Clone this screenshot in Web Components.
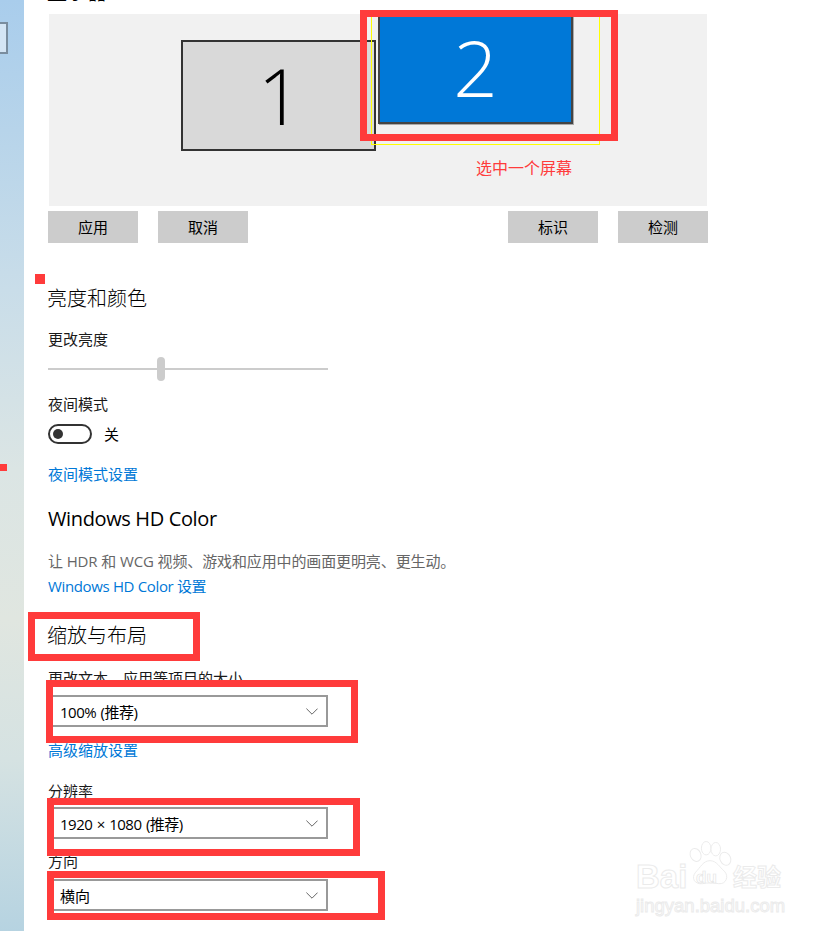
<!DOCTYPE html>
<html lang="zh">
<head>
<meta charset="utf-8">
<title>显示</title>
<style>
    html, body { margin: 0; padding: 0; background: #fff; }
    body { width: 831px; height: 931px; overflow: hidden; font-family: "Open Sans", "Noto Sans CJK SC", sans-serif; }
</style>
</head>
<body>
<display-settings></display-settings>

<script>
const CJK = '"Open Sans", "Noto Sans CJK SC", sans-serif';

class RedBox extends HTMLElement {
    connectedCallback() {
        const [x, y, w, h] = this.getAttribute('rect').split(',');
        this.attachShadow({ mode: 'open' });
        this.shadowRoot.innerHTML = `
            <style>
                :host {
                    position: absolute;
                    left: ${x}px;
                    top: ${y}px;
                    width: ${w}px;
                    height: ${h}px;
                    box-sizing: border-box;
                    border: 7px solid #ff3b3b;
                    pointer-events: none;
                }
            </style>
        `;
    }
}
customElements.define('red-box', RedBox);

class SectionHeading extends HTMLElement {
    connectedCallback() {
        this.attachShadow({ mode: 'open' });
        this.shadowRoot.innerHTML = `
            <style>
                :host { display: block; margin-left: -1px; font-size: 20px; font-weight: 300; line-height: 28px; color: #000; white-space: nowrap; }
            </style>
            <slot></slot>
        `;
    }
}
customElements.define('section-heading', SectionHeading);

class FieldLabel extends HTMLElement {
    connectedCallback() {
        this.attachShadow({ mode: 'open' });
        this.shadowRoot.innerHTML = `
            <style>
                :host { display: block; font-size: 15px; line-height: 20px; color: #1a1a1a; white-space: nowrap; }
            </style>
            <slot></slot>
        `;
    }
}
customElements.define('field-label', FieldLabel);

class SettingsLink extends HTMLElement {
    connectedCallback() {
        this.attachShadow({ mode: 'open' });
        this.shadowRoot.innerHTML = `
            <style>
                :host { display: block; font-size: 15px; line-height: 20px; color: #0078d7; white-space: nowrap; cursor: pointer; }
            </style>
            <slot></slot>
        `;
    }
}
customElements.define('settings-link', SettingsLink);

class ActionButton extends HTMLElement {
    connectedCallback() {
        this.attachShadow({ mode: 'open' });
        this.shadowRoot.innerHTML = `
            <style>
                :host {
                    display: flex;
                    align-items: center;
                    justify-content: center;
                    box-sizing: border-box;
                    width: 90px;
                    height: 32px;
                    padding-bottom: 2px;
                    background: #cccccc;
                    color: #000;
                    font-size: 15px;
                }
            </style>
            <slot></slot>
        `;
    }
}
customElements.define('action-button', ActionButton);

class BrightnessSlider extends HTMLElement {
    connectedCallback() {
        this.attachShadow({ mode: 'open' });
        this.shadowRoot.innerHTML = `
            <style>
                :host { display: block; position: relative; width: 280px; height: 24px; }
                .track { position: absolute; left: 0; right: 0; top: 11px; height: 2px; background: #cccccc; }
                .thumb { position: absolute; left: 109px; top: 0; width: 8px; height: 24px; border-radius: 4px; background: #cccccc; }
            </style>
            <div class="track"></div>
            <div class="thumb"></div>
        `;
    }
}
customElements.define('brightness-slider', BrightnessSlider);

class ToggleSwitch extends HTMLElement {
    connectedCallback() {
        this.attachShadow({ mode: 'open' });
        this.shadowRoot.innerHTML = `
            <style>
                :host { display: flex; align-items: center; gap: 12px; font-size: 15px; line-height: 20px; color: #000; }
                .sw {
                    box-sizing: border-box;
                    width: 44px;
                    height: 20px;
                    border: 2px solid #333;
                    border-radius: 10px;
                    padding: 3px 0 0 3px;
                }
                .dot { width: 10px; height: 10px; border-radius: 50%; background: #333; }
            </style>
            <div class="sw"><div class="dot"></div></div>
            <slot></slot>
        `;
    }
}
customElements.define('toggle-switch', ToggleSwitch);

class ComboBox extends HTMLElement {
    connectedCallback() {
        this.attachShadow({ mode: 'open' });
        this.shadowRoot.innerHTML = `
            <style>
                :host {
                    display: flex;
                    align-items: center;
                    justify-content: space-between;
                    box-sizing: border-box;
                    width: 280px;
                    height: 32px;
                    border: 2px solid #999999;
                    padding: 0 8px 0 10px;
                    font-size: 15px;
                    color: #000;
                    background: #fff;
                    white-space: nowrap;
                }
                svg { display: block; }
            </style>
            <slot></slot>
            <svg width="12" height="7" viewBox="0 0 12 7"><path d="M0.4 0.6 L6 6.2 L11.6 0.6" fill="none" stroke="#666" stroke-width="1"/></svg>
        `;
    }
}
customElements.define('combo-box', ComboBox);

class MonitorLayout extends HTMLElement {
    connectedCallback() {
        this.attachShadow({ mode: 'open' });
        this.shadowRoot.innerHTML = `
            <style>
                :host { display: block; position: relative; width: 658px; height: 192px; margin-left: 1px; background: #f1f1f1; }
                .mon {
                    position: absolute;
                    box-sizing: border-box;
                    display: flex;
                    align-items: center;
                    justify-content: center;
                    padding-bottom: 2px;
                    font-family: "Open Sans", sans-serif;
                    font-weight: 300;
                    font-size: 78px;
                    line-height: 1;
                }
                .one { left: 132px; top: 26px; width: 195px; height: 111px; background: #d9d9d9; border: 2px solid #333; color: #000; padding-left: 3px; }
                .two { left: 329px; top: 0; width: 195px; height: 110px; background: #0078d7; border: 2px solid #444; border-top: 0; color: #fff; box-shadow: 1px 1px 0 #aaa; }
                .guide { position: absolute; left: 322px; top: 0; width: 229px; height: 131px; box-sizing: border-box; border: 1px solid #ffff00; border-top: 0; }
                .note { position: absolute; left: 427px; top: 143px; font-size: 16px; line-height: 22px; color: #ff3b3b; font-family: ${CJK}; white-space: nowrap; }
            </style>
            <div class="mon one">1</div>
            <div class="guide"></div>
            <div class="mon two">2</div>
            <div class="note">选中一个屏幕</div>
        `;
    }
}
customElements.define('monitor-layout', MonitorLayout);

class BaiduWatermark extends HTMLElement {
    connectedCallback() {
        this.attachShadow({ mode: 'open' });
        this.shadowRoot.innerHTML = `
            <style>
                :host {
                    position: absolute;
                    left: 636px;
                    top: 840px;
                    width: 150px;
                    height: 76px;
                    color: #fff;
                    font-family: "Liberation Sans", sans-serif;
                    -webkit-text-stroke: 1px #ebebeb;
                    pointer-events: none;
                }
                .bai { position: absolute; left: 0; top: 20px; font-size: 33px; font-weight: 700; line-height: 34px; }
                .jing { font-family: "Noto Sans CJK SC", sans-serif; font-size: 24px; font-weight: 700; line-height: 30px; position: absolute; left: 97px; top: 21px; white-space: nowrap; }
                .url { position: absolute; left: 0; top: 55px; font-size: 18.5px; line-height: 22px; white-space: nowrap; }
                svg { position: absolute; left: 51px; top: 1px; }
                .du { position: absolute; left: 60px; top: 29px; font-size: 17px; font-weight: 700; line-height: 18px; -webkit-text-stroke: 0.7px #e6e6e6; }
            </style>
            <svg width="46" height="47" viewBox="0 0 48 48" fill="#fff" stroke="#ebebeb" stroke-width="1">
                <ellipse cx="9" cy="14" rx="5.5" ry="7" transform="rotate(-25 9 14)"/>
                <ellipse cx="20" cy="7" rx="5" ry="7"/>
                <ellipse cx="30" cy="8" rx="5" ry="7"/>
                <ellipse cx="40" cy="18" rx="5.5" ry="7" transform="rotate(-25 40 18)"/>
                <path d="M24 20 C31 20 34 27 39 31 C44 36 41 45 33 44 C28 43 21 43 16 44 C8 45 4 38 9 32 C14 27 17 20 24 20 Z"/>
            </svg>
            <span class="bai">Bai</span>
            <span class="du">du</span>
            <span class="jing">经验</span>
            <span class="url">jingyan.baidu.com</span>
        `;
    }
}
customElements.define('baidu-watermark', BaiduWatermark);

class DisplaySettings extends HTMLElement {
    connectedCallback() {
        this.attachShadow({ mode: 'open' });
        this.shadowRoot.innerHTML = `
            <style>
                :host {
                    display: flex;
                    position: relative;
                    width: 831px;
                    height: 931px;
                    overflow: hidden;
                    background: #fff;
                    font-family: ${CJK};
                }
                .wallpaper {
                    position: relative;
                    flex: 0 0 24px;
                    background: linear-gradient(180deg, #a9cdec 0, #b7d4ea 130px, #c9dde9 290px, #dbe5e4 470px, #e0e6e0 620px, #d5e2e2 760px, #b6d3e1 931px);
                }
                .wallpaper .tab { position: absolute; left: -2px; top: 22px; width: 10px; height: 32px; box-sizing: border-box; border: 2px solid #7a8d9e; background: #d4e5f4; }
                .wallpaper .mark { position: absolute; left: 0; top: 464px; width: 7px; height: 7px; background: #ff3b3b; }
                .pin { position: absolute; left: 35px; top: 274px; width: 10px; height: 10px; background: #ff3b3b; }
                main { flex: 1; padding-left: 24px; margin-top: -21px; }
                .buttons { display: flex; margin-top: 5px; width: 660px; }
                .buttons action-button + action-button { margin-left: 20px; }
                .buttons .push { margin-left: auto; }
                .desc { display: block; font-size: 15px; line-height: 20px; color: #666; white-space: nowrap; letter-spacing: -0.12px; }
                .latin { margin-left: 0; font-weight: 400; letter-spacing: -0.37px; }
                .narrow { letter-spacing: -0.35px; }
                .spaced { letter-spacing: -0.5px; word-spacing: 1px; }
                .m5 { margin-top: 5px; } .m6 { margin-top: 6px; } .m7 { margin-top: 7px; } .m8 { margin-top: 8px; } .m10 { margin-top: 10px; }
                .m12 { margin-top: 12px; } .m13 { margin-top: 13px; } .m16 { margin-top: 16px; } .m18 { margin-top: 18px; }
                .m20 { margin-top: 20px; } .m21 { margin-top: 21px; } .m26 { margin-top: 26px; } .m42 { margin-top: 42px; }
            </style>
            <div class="wallpaper"><div class="tab"></div><div class="mark"></div></div>
            <main>
                <section-heading>显示器</section-heading>
                <monitor-layout class="m7"></monitor-layout>
                <div class="buttons">
                    <action-button>应用</action-button>
                    <action-button>取消</action-button>
                    <action-button class="push">标识</action-button>
                    <action-button>检测</action-button>
                </div>

                <section-heading class="m42">亮度和颜色</section-heading>
                <field-label class="m16">更改亮度</field-label>
                <brightness-slider class="m8"></brightness-slider>
                <field-label class="m13">夜间模式</field-label>
                <toggle-switch class="m10">关</toggle-switch>
                <settings-link class="m20">夜间模式设置</settings-link>

                <section-heading class="m21 latin">Windows HD Color</section-heading>
                <span class="desc m18">让 HDR 和 WCG 视频、游戏和应用中的画面更明亮、更生动。</span>
                <settings-link class="m5 narrow">Windows HD Color 设置</settings-link>

                <section-heading class="m26">缩放与布局</section-heading>
                <field-label class="m18">更改文本、应用等项目的大小</field-label>
                <combo-box class="m7 spaced">100% (推荐)</combo-box>
                <settings-link class="m13">高级缩放设置</settings-link>
                <field-label class="m21">分辨率</field-label>
                <combo-box class="m6 spaced">1920 × 1080 (推荐)</combo-box>
                <field-label class="m12">方向</field-label>
                <combo-box class="m8">横向</combo-box>
            </main>
            <div class="pin"></div>
            <red-box rect="360,10,258,131"></red-box>
            <red-box rect="28,612,172,49"></red-box>
            <red-box rect="46,680,312,63"></red-box>
            <red-box rect="47,798,313,58"></red-box>
            <red-box rect="47,871,338,49"></red-box>
            <baidu-watermark></baidu-watermark>
        `;
    }
}
customElements.define('display-settings', DisplaySettings);
</script>
</body>
</html>
